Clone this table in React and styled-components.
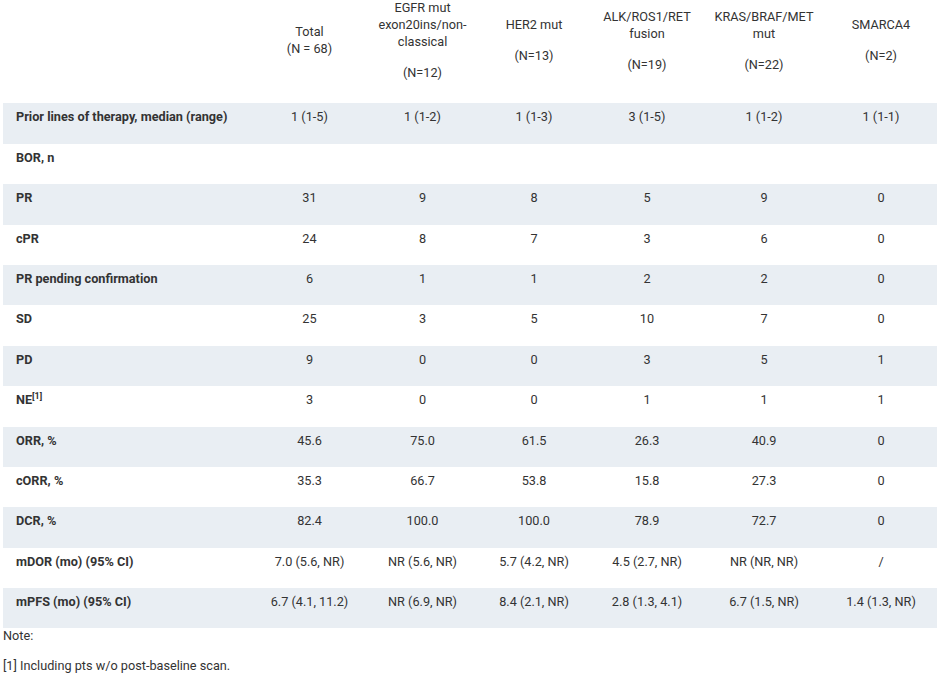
import React from "react";
import styled, { createGlobalStyle } from "styled-components";

const GlobalStyle = createGlobalStyle`
  html, body {
    margin: 0;
    padding: 0;
    background: #ffffff;
  }
  body {
    font-family: Roboto, "Noto Sans", "Liberation Sans", sans-serif;
    font-size: 12.7px;
    color: #333333;
  }
`;

const columns = [
  { width: 248 },
  { width: 117, title: ["Total", "(N = 68)"], n: null },
  { width: 109, title: ["EGFR mut", "exon20ins/non-", "classical"], n: "(N=12)" },
  { width: 114, title: ["HER2 mut"], n: "(N=13)" },
  { width: 112, title: ["ALK/ROS1/RET", "fusion"], n: "(N=19)" },
  { width: 122, title: ["KRAS/BRAF/MET", "mut"], n: "(N=22)" },
  { width: 112, title: ["SMARCA4"], n: "(N=2)" },
];

const rows = [
  { label: "Prior lines of therapy, median (range)", values: ["1 (1-5)", "1 (1-2)", "1 (1-3)", "3 (1-5)", "1 (1-2)", "1 (1-1)"] },
  { label: "BOR, n", values: ["", "", "", "", "", ""] },
  { label: "PR", values: ["31", "9", "8", "5", "9", "0"] },
  { label: "cPR", values: ["24", "8", "7", "3", "6", "0"] },
  { label: "PR pending confirmation", values: ["6", "1", "1", "2", "2", "0"] },
  { label: "SD", values: ["25", "3", "5", "10", "7", "0"] },
  { label: "PD", values: ["9", "0", "0", "3", "5", "1"] },
  { label: "NE", note: "[1]", values: ["3", "0", "0", "1", "1", "1"] },
  { label: "ORR, %", values: ["45.6", "75.0", "61.5", "26.3", "40.9", "0"] },
  { label: "cORR, %", values: ["35.3", "66.7", "53.8", "15.8", "27.3", "0"] },
  { label: "DCR, %", values: ["82.4", "100.0", "100.0", "78.9", "72.7", "0"] },
  { label: "mDOR (mo) (95% CI)", values: ["7.0 (5.6, NR)", "NR (5.6, NR)", "5.7 (4.2, NR)", "4.5 (2.7, NR)", "NR (NR, NR)", "/"] },
  { label: "mPFS (mo) (95% CI)", values: ["6.7 (4.1, 11.2)", "NR (6.9, NR)", "8.4 (2.1, NR)", "2.8 (1.3, 4.1)", "6.7 (1.5, NR)", "1.4 (1.3, NR)"] },
];

const Page = styled.div`
  padding-left: 3px;
  width: 934px;
`;

const Table = styled.table`
  width: 934px;
  border-collapse: collapse;
  border-spacing: 0;
  table-layout: fixed;
`;

const HeadCell = styled.th`
  box-sizing: border-box;
  height: 103.4px;
  padding: 0 2px 21px;
  vertical-align: middle;
  text-align: center;
  font-weight: 400;
  line-height: 16.8px;
  color: #333333;
  white-space: nowrap;
`;

const HeadText = styled.p`
  margin: 0;
  & + & {
    margin-top: 14.5px;
  }
`;

const Row = styled.tr`
  background: ${(p) => (p.$shaded ? "#e9eef3" : "#ffffff")};
`;

const LabelCell = styled.td`
  padding: 6px 8px 17.6px 13px;
  line-height: 16.8px;
  font-weight: 700;
  text-align: left;
  vertical-align: top;
  white-space: nowrap;
`;

const ValueCell = styled.td`
  padding: 6px 2px 17.6px;
  line-height: 16.8px;
  text-align: center;
  vertical-align: top;
  white-space: nowrap;
`;

const Sup = styled.sup`
  font-size: 9px;
  line-height: 0;
  vertical-align: 5px;
`;

const Notes = styled.div`
  line-height: 16.8px;
  color: #333333;
  p {
    margin: 0 0 13.2px;
  }
`;

export default function App() {
  return (
    <Page>
      <GlobalStyle />
      <Table>
        <colgroup>
          {columns.map((c, i) => (
            <col key={i} style={{ width: c.width }} />
          ))}
        </colgroup>
        <thead>
          <tr>
            {columns.map((c, i) => (
              <HeadCell key={i}>
                {c.title && (
                  <HeadText>
                    {c.title.map((t, j) => (
                      <React.Fragment key={j}>
                        {j > 0 && <br />}
                        {t}
                      </React.Fragment>
                    ))}
                  </HeadText>
                )}
                {c.n && <HeadText>{c.n}</HeadText>}
              </HeadCell>
            ))}
          </tr>
        </thead>
        <tbody>
          {rows.map((r, i) => (
            <Row key={r.label} $shaded={i % 2 === 0}>
              <LabelCell>
                {r.label}
                {r.note && <Sup>{r.note}</Sup>}
              </LabelCell>
              {r.values.map((v, j) => (
                <ValueCell key={j}>{v}</ValueCell>
              ))}
            </Row>
          ))}
        </tbody>
      </Table>
      <Notes>
        <p>Note:</p>
        <p>[1] Including pts w/o post-baseline scan.</p>
      </Notes>
    </Page>
  );
}
